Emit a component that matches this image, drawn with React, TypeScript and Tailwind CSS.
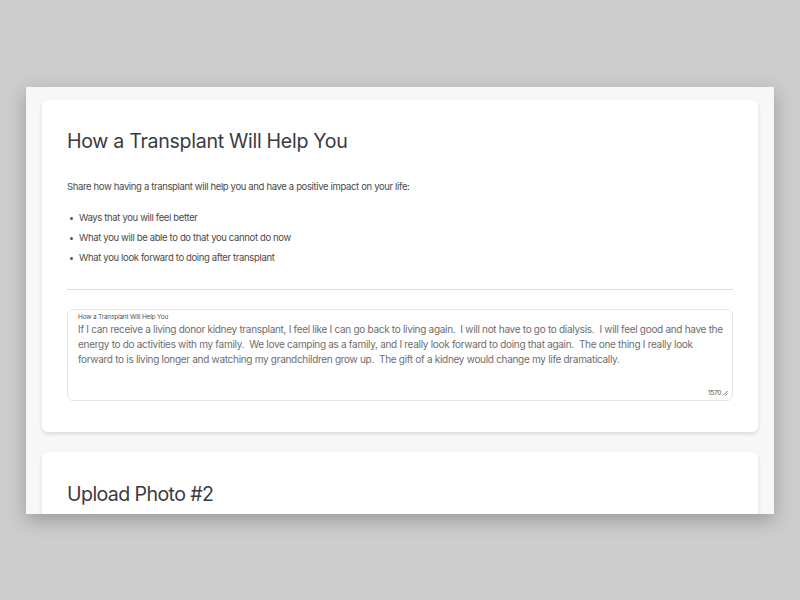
const storyLines = [
  'If I can receive a living donor kidney transplant, I feel like I can go back to living again.  I will not have to go to dialysis.  I will feel good and have the',
  'energy to do activities with my family.  We love camping as a family, and I really look forward to doing that again.  The one thing I really look',
  'forward to is living longer and watching my grandchildren grow up.  The gift of a kidney would change my life dramatically.',
]

const bullets = [
  'Ways that you will feel better',
  'What you will be able to do that you cannot do now',
  'What you look forward to doing after transplant',
]

export default function App() {
  return (
    <div
      className="w-[800px] h-[600px] bg-[#cdcdcd] pt-[87px] px-[26px] overflow-hidden"
      style={{ fontFamily: 'Inter, "Noto Sans", sans-serif' }}
    >
      {/* screenshot frame */}
      <div className="h-[427px] bg-[#f7f7f7] shadow-[0_6px_18px_rgba(0,0,0,0.25)] overflow-hidden px-[16px] pt-[13px] flex flex-col gap-[20px]">
        {/* card 1 */}
        <div className="bg-white rounded-md shadow-[0_2px_4px_rgba(0,0,0,0.12)] px-[25px] pt-[27px] pb-[31px] shrink-0">
          <h2 className="text-[19.6px] leading-[28px] text-[#3a3b3f] tracking-[-0.3px]">How a Transplant Will Help You</h2>
          <p className="mt-[25px] text-[9.5px] leading-[14px] text-[#4a4a4a] tracking-[-0.35px]">
            Share how having a transplant will help you and have a positive impact on your life:
          </p>
          <ul className="mt-[17px] flex flex-col gap-[6px]">
            {bullets.map((b) => (
              <li key={b} className="flex items-center text-[9.5px] leading-[14px] text-[#4a4a4a] tracking-[-0.35px]">
                <span className="w-[3px] h-[3px] rounded-full bg-[#555] ml-[3px] mr-[6px]" />
                {b}
              </li>
            ))}
          </ul>
          <div className="mt-[24px] h-px bg-[#dcdcdc]" />
          <div className="mt-[19px] relative h-[92px] rounded-md border border-[#e4e4e4] px-[10px] pt-[3px]">
            <div className="text-[6.5px] leading-[9px] text-[#555] tracking-[-0.2px]">How a Transplant Will Help You</div>
            {storyLines.map((l) => (
              <p key={l} className="text-[10px] leading-[15px] text-[#6e6e6e] whitespace-pre tracking-[-0.3px]">{l}</p>
            ))}
            <div className="absolute right-[4px] bottom-[3px] flex items-end gap-[1px]">
              <span className="text-[6.5px] leading-[8px] text-[#555] tracking-[-0.3px]">1570</span>
              <svg width="6" height="6" viewBox="0 0 6 6" className="mb-[1px]">
                <path d="M1 5.5 L5.5 1 M3.5 5.5 L5.5 3.5" stroke="#555" strokeWidth="0.8" />
              </svg>
            </div>
          </div>
        </div>
        {/* card 2 */}
        <div className="bg-white rounded-md shadow-[0_2px_4px_rgba(0,0,0,0.12)] px-[25px] pt-[28px] pb-[30px] shrink-0">
          <h2 className="text-[19.6px] leading-[28px] text-[#3a3b3f] tracking-[-0.6px]">Upload Photo #2</h2>
        </div>
      </div>
    </div>
  )
}
